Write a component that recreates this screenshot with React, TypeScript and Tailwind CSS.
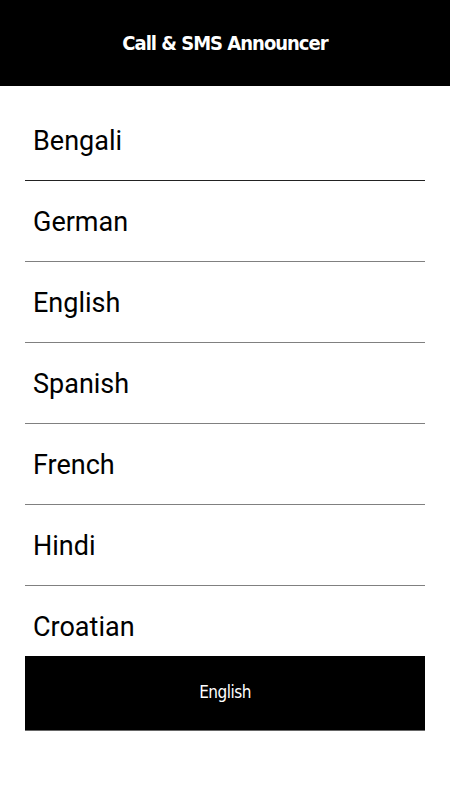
import React from "react";

const LANGUAGES = ["Bengali", "German", "English", "Spanish", "French", "Hindi", "Croatian"];

const condensed = { fontFamily: '"DejaVu Sans", sans-serif', fontStretch: "condensed" } as const;

export default function App() {
  return (
    <div className="w-[450px] h-[800px] bg-white flex flex-col overflow-hidden">
      {/* Title bar */}
      <div className="h-[86px] bg-black flex items-center justify-center shrink-0">
        <h1 style={condensed} className="text-white text-[20px] font-bold tracking-[-1px] pb-[1px]">
          Call &amp; SMS Announcer
        </h1>
      </div>

      {/* Language list */}
      <div className="h-[570px] pt-[14px] px-[25px] overflow-hidden shrink-0">
        <ul>
          {LANGUAGES.map((lang, idx) => (
            <li
              key={lang}
              className={`h-[81px] flex items-center pl-2 pt-[2px] border-b ${idx === 0 ? "border-[#222]" : "border-[#808080]"}`}
            >
              <span className="font-['Roboto',sans-serif] text-[27px] text-black">{lang}</span>
            </li>
          ))}
        </ul>
      </div>

      {/* Selected language */}
      <div className="px-[25px]">
        <div className="h-[75px] bg-black border-b border-[#666] flex items-center justify-center">
          <span style={condensed} className="text-white text-[17px] tracking-[-0.5px]">English</span>
        </div>
      </div>
    </div>
  );
}
